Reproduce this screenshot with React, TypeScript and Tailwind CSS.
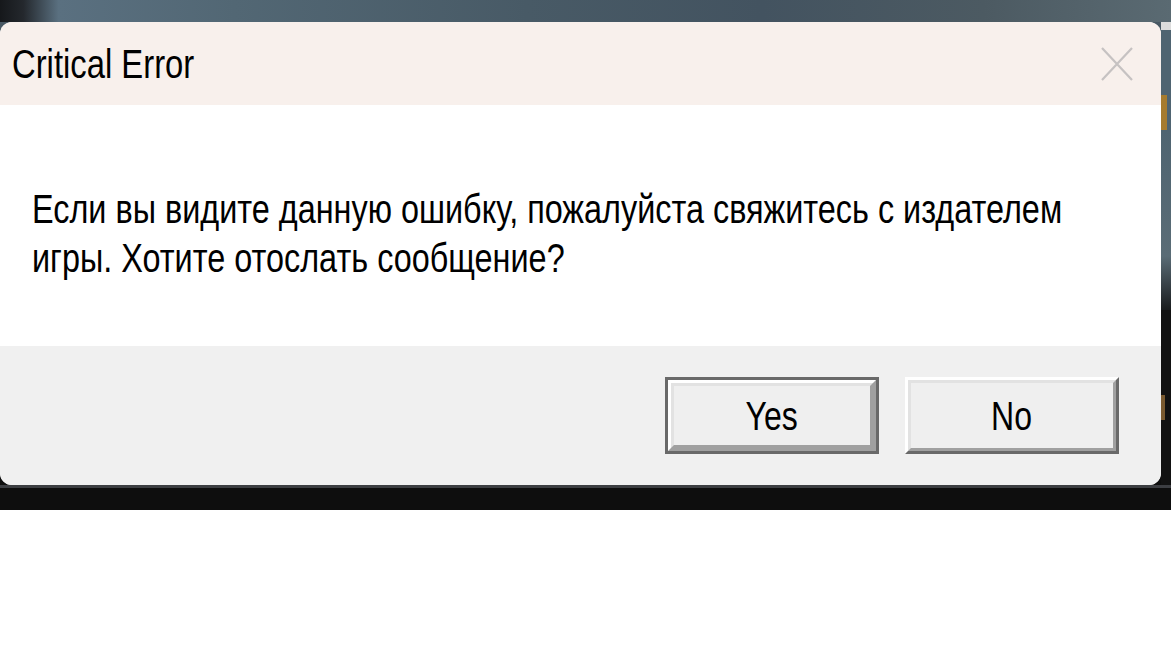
import React from 'react';

// Segoe-like narrow look: Arial metrics squeezed horizontally
const font = "font-['Liberation_Sans',Arial,sans-serif]";

const CloseIcon: React.FC = () => (
  <svg width="32" height="34" viewBox="0 0 32 34" fill="none" stroke="#c6c2c2" strokeWidth={2.2}>
    <path d="M1 1L31 33M31 1L1 33" />
  </svg>
);

interface DlgButtonProps {
  label: string;
  isDefault?: boolean;
}

const DlgButton: React.FC<DlgButtonProps> = ({ label, isDefault }) => {
  const face = (
    <div className="flex-1 flex border-[3px] border-t-[#e2e2e2] border-l-[#e2e2e2] border-r-[#a0a0a0] border-b-[#a0a0a0] bg-[#efefef] items-center justify-center">
      <span className={`${font} inline-block text-[40px] leading-none text-black scale-x-[0.8]`}>{label}</span>
    </div>
  );
  if (isDefault) {
    return (
      <div className="w-[214px] h-[77px] flex border-[3px] border-[#696969]">
        <div className="flex-1 flex border-[3px] border-t-white border-l-white border-r-[#a0a0a0] border-b-[#a0a0a0]">
          {face}
        </div>
      </div>
    );
  }
  return (
    <div className="w-[214px] h-[77px] flex border-[3px] border-t-white border-l-white border-r-[#696969] border-b-[#696969]">
      {face}
    </div>
  );
};

export default function App() {
  return (
    <div className="w-[1171px] h-[665px] bg-white overflow-hidden flex flex-col">
      <div className="h-[510px] flex flex-col bg-[linear-gradient(180deg,#4a5a65_0%,#3e4c56_45%,#141414_62%,#0e0e0e_100%)]">
        {/* blurred desktop behind the dialog */}
        <div className="h-[22px] shrink-0 bg-[linear-gradient(90deg,#16181b_0%,#24282d_2%,#5a7080_5%,#526774_20%,#485a66_45%,#435360_65%,#4c5a62_84%,#5a6a72_100%)]" />

        <div className="flex h-[463px]">
          <div className="w-[1161px] h-full rounded-[12px] overflow-hidden flex flex-col bg-[#f0f0f0]">
            <div className="h-[83px] bg-[#f8f0ec] flex items-center justify-between pl-[12px] pr-[28px]">
              <span className={`${font} inline-block text-[40px] leading-none text-black whitespace-nowrap scale-x-[0.82] origin-left`}>
                Critical Error
              </span>
              <CloseIcon />
            </div>

            <div className="h-[241px] bg-white pl-[32px] pt-[80px] overflow-hidden">
              <p className={`${font} text-[40px] leading-[49px] text-black whitespace-nowrap scale-x-[0.81] origin-left`}>
                Если вы видите данную ошибку, пожалуйста свяжитесь с издателем
                <br />
                игры. Хотите отослать сообщение?
              </p>
            </div>

            <div className="flex-1 bg-[#f0f0f0] flex items-center justify-end gap-[26px] pr-[42px]">
              <DlgButton label="Yes" isDefault />
              <DlgButton label="No" />
            </div>
          </div>

          <div className="flex-1 flex flex-col">
            <div className="h-[8px] bg-[#dcdcdc]" />
            <div className="h-[65px] bg-[#4f6471]" />
            <div className="h-[35px] flex">
              <div className="w-[6px] bg-[#a67b2e]" />
              <div className="flex-1 bg-[#4f6471]" />
            </div>
            <div className="h-[180px] bg-[linear-gradient(180deg,#4f6471_0%,#5a6c76_70%,#1a1c1e_100%)]" />
            <div className="h-[85px] bg-[#121212]" />
            <div className="h-[25px] flex">
              <div className="w-[4px] bg-[#7a5a30]" />
              <div className="flex-1 bg-[#121212]" />
            </div>
            <div className="flex-1 bg-[#121212]" />
          </div>
        </div>

        <div className="flex-1 bg-[#0e0e0e] border-t-[3px] border-[#3c3e42]" />
      </div>
    </div>
  );
}
